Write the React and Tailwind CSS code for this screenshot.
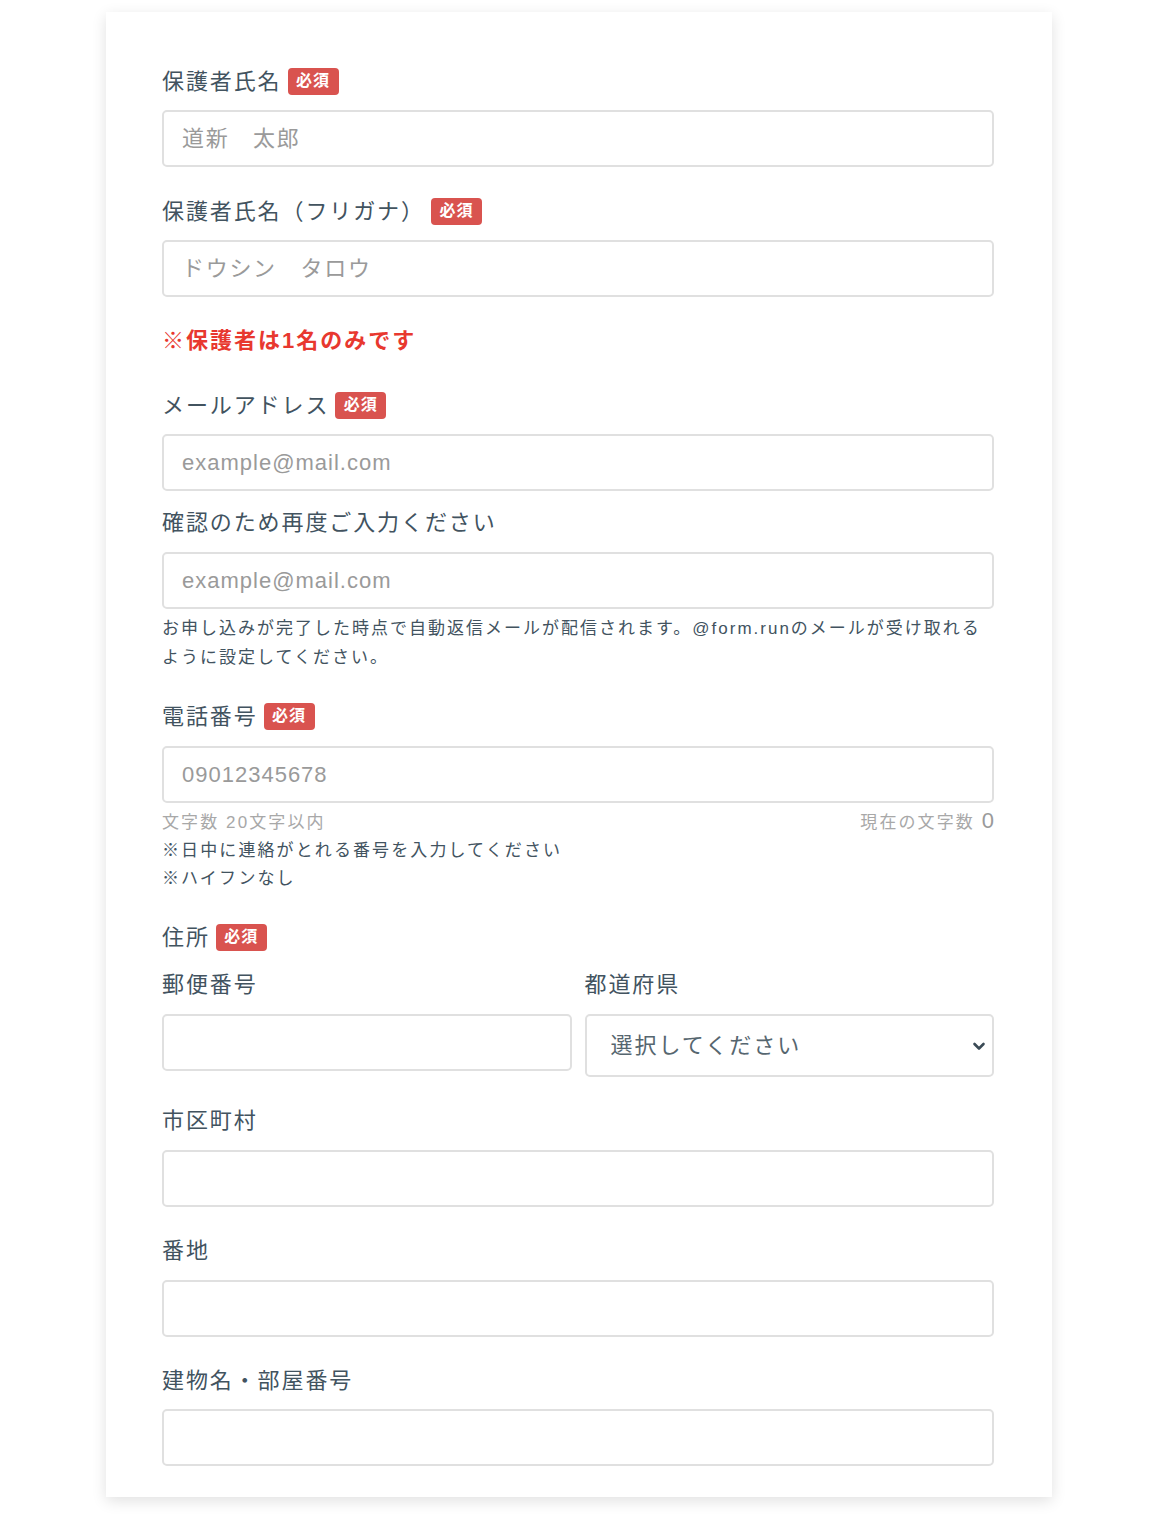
const font = { fontFamily: '"Liberation Sans", "Noto Sans CJK JP", sans-serif' };

function Badge() {
  return (
    <span className="ml-[6px] inline-flex h-[27px] w-[51px] items-center justify-center rounded-[4px] bg-[#d9534f] text-[16px] font-bold tracking-[1px] text-white">
      必須
    </span>
  );
}

function Label({ children, required, className = '' }) {
  return (
    <div className={`flex h-[32px] items-center text-[22px] tracking-[1.9px] text-[#42535f] ${className}`}>
      <span>{children}</span>
      {required ? <Badge /> : null}
    </div>
  );
}

function Input({ placeholder, latin, className = '' }) {
  return (
    <input
      type="text"
      placeholder={placeholder}
      className={`block h-[57px] w-full rounded-[5px] border-2 border-[#e0e0e0] bg-white px-[18px] text-[22px] text-[#42535f] outline-none placeholder:text-[#9a9a9a] ${latin ? 'tracking-[1px]' : 'tracking-[1.7px]'} ${className}`}
      style={font}
    />
  );
}

export default function App() {
  return (
    <div className="min-h-[1522px] bg-white pt-[12px]" style={font}>
      <div className="ml-[106px] w-[946px] bg-white pb-[31px] pl-[56px] pr-[58px] pt-[53px] shadow-[0_4px_14px_rgba(0,0,0,0.12)]">
        <Label required>保護者氏名</Label>
        <Input className="mt-[13px]" placeholder="道新　太郎" />

        <Label required className="mt-[28px]">保護者氏名（フリガナ）</Label>
        <Input className="mt-[13px]" placeholder="ドウシン　タロウ" />

        <p className="mt-[28px] h-[32px] text-[22px] font-bold leading-[32px] tracking-[2px] text-[#e8382f]">
          ※保護者は1名のみです
        </p>

        <Label required className="mt-[32px]">メールアドレス</Label>
        <Input latin className="mt-[13px]" placeholder="example@mail.com" />

        <Label className="mt-[15px]">確認のため再度ご入力ください</Label>
        <Input latin className="mt-[14px]" placeholder="example@mail.com" />
        <p className="mt-[5px] whitespace-nowrap text-[17px] leading-[29px] tracking-[2px] text-[#42535f]">
          お申し込みが完了した時点で自動返信メールが配信されます。@form.runのメールが受け取れる
          <br />
          ように設定してください。
        </p>

        <Label required className="mt-[28px]">電話番号</Label>
        <Input latin className="mt-[14px]" placeholder="09012345678" />
        <div className="mt-[6px] text-[17px] leading-[28px] tracking-[2.1px]">
          <div className="flex h-[28px] items-center justify-between text-[#a8a8a8]">
            <span>文字数 20文字以内</span>
            <span>
              現在の文字数 <span className="text-[22px] leading-none tracking-normal text-[#9a9a9a]">0</span>
            </span>
          </div>
          <div className="text-[#42535f]">※日中に連絡がとれる番号を入力してください</div>
          <div className="text-[#42535f]">※ハイフンなし</div>
        </div>

        <Label required className="mt-[28px]">住所</Label>
        <div className="mt-[15px] grid grid-cols-2 gap-x-[13px]">
          <div>
            <Label>郵便番号</Label>
            <Input className="mt-[14px]" />
          </div>
          <div>
            <Label>都道府県</Label>
            <div className="relative mt-[14px]">
              <select
                defaultValue=""
                className="block h-[63px] w-full appearance-none rounded-[5px] border-2 border-[#e0e0e0] bg-white pl-[24px] text-[22px] tracking-[2px] text-[#56666f] outline-none"
                style={font}
              >
                <option value="">選択してください</option>
              </select>
              <svg
                className="pointer-events-none absolute right-[8px] top-1/2 -translate-y-1/2"
                width="14"
                height="14"
                viewBox="0 0 14 14"
              >
                <path d="M2.5 5 L7 9.5 L11.5 5" fill="none" stroke="#3a4a55" strokeWidth="2.6" strokeLinecap="round" strokeLinejoin="round" />
              </svg>
            </div>
          </div>
        </div>

        <Label className="mt-[27px]">市区町村</Label>
        <Input className="mt-[14px]" />

        <Label className="mt-[27px]">番地</Label>
        <Input className="mt-[14px]" />

        <Label className="mt-[27px]">建物名・部屋番号</Label>
        <Input className="mt-[13px]" />
      </div>
    </div>
  );
}
